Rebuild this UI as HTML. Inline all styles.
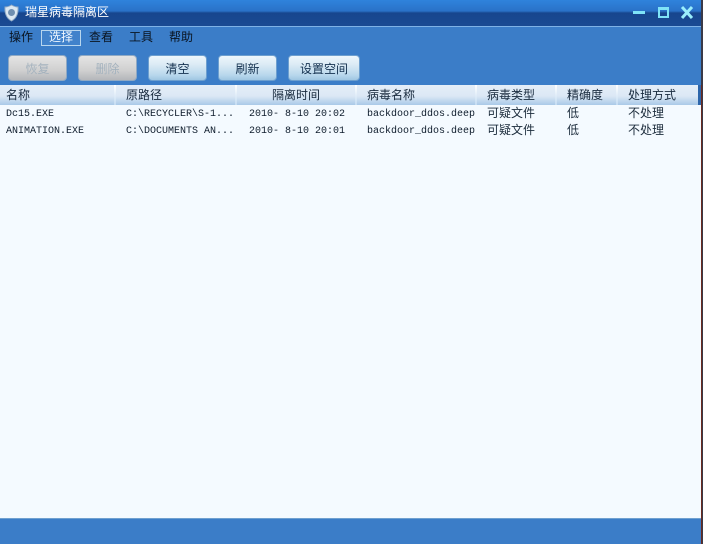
<!DOCTYPE html>
<html lang="zh"><head><meta charset="utf-8"><style>
html,body{margin:0;padding:0;width:703px;height:544px;overflow:hidden;background:#3b7dc8}
body{position:relative;font:12px/14px "WenQuanYi Zen Hei","Noto Sans CJK SC",sans-serif;color:#123}
div{position:absolute;white-space:nowrap}
.m{top:30px;height:14px;color:#0a1420}
.b{top:55px;height:26px;line-height:25px;text-align:center;border-radius:4px;box-sizing:border-box;background:linear-gradient(#eef7fc 0%,#dcebf5 35%,#b8d7ec 80%,#9fc6e2 100%);border:1px solid #6d9fcf;color:#14314f}
.d{background:linear-gradient(#e4e4e4,#d0d0d0 60%,#b4b6ba);color:#a4b2be;border-color:#8fa9c4}
.h{top:88px;color:#17293d}
.s{top:85px;width:2px;height:20px;background:linear-gradient(#fff,#c4dcf2);}
.t{color:#1c2c3c}
.l{font-family:"Liberation Mono",monospace;font-size:10px;letter-spacing:0;color:#0e1c2c;margin-top:2px}
</style></head><body>
<div style="left:0;top:0;width:703px;height:26px;background:linear-gradient(#2f83dc 0,#2a72c8 11px,#17468e 13px,#1a4a92 25px)"></div>
<div style="left:0;top:26px;width:703px;height:1px;background:#7fb2e6"></div>
<svg style="position:absolute;left:4px;top:4px" width="15" height="18" viewBox="0 0 15 18"><path d="M7.5 1 C10 2.500 12 3 14 3 C14.500 10 12 14.500 7.500 17 C3 14.500 .5 10 1 3 C3 3 5 2.500 7.500 1Z" fill="#dbe8f2" stroke="#8fa9c4"/><circle cx="7.500" cy="8.500" r="3.500" fill="#6f8fb0"/></svg>
<div style="left:25px;top:5px;color:#fff">瑞星病毒隔离区</div>
<div style="left:633px;top:11px;width:12px;height:3px;background:#7fe3f7"></div>
<div style="left:658px;top:7px;width:11px;height:11px;box-sizing:border-box;border:2px solid #7fe3f7;border-top-width:3px"></div>
<svg style="position:absolute;left:680px;top:5px" width="14" height="15" viewBox="0 0 14 15"><path d="M2 2 L12 13 M12 2 L2 13" stroke="#9aeefc" stroke-width="3"/></svg>

<div class="m" style="left:9px">操作</div>
<div style="left:41px;top:30px;width:40px;height:16px;box-sizing:border-box;border:1px solid #b8d6ee;background:#4182cb"></div>
<div class="m" style="left:49px;color:#f0f8ff">选择</div>
<div class="m" style="left:89px">查看</div>
<div class="m" style="left:129px">工具</div>
<div class="m" style="left:169px">帮助</div>

<div class="b d" style="left:8px;width:59px">恢复</div>
<div class="b d" style="left:78px;width:59px">删除</div>
<div class="b" style="left:148px;width:59px">清空</div>
<div class="b" style="left:218px;width:59px">刷新</div>
<div class="b" style="left:288px;width:72px">设置空间</div>

<div style="left:0;top:85px;width:698px;height:20px;background:linear-gradient(#e4eef8,#dce8f5 55%,#a9c9e8)"></div>
<div style="left:698px;top:85px;width:3px;height:20px;background:#2d66ab"></div>
<div class="s" style="left:114px"></div><div class="s" style="left:235px"></div><div class="s" style="left:355px"></div><div class="s" style="left:475px"></div><div class="s" style="left:555px"></div><div class="s" style="left:616px"></div>
<div class="h" style="left:6px">名称</div>
<div class="h" style="left:126px">原路径</div>
<div class="h" style="left:272px">隔离时间</div>
<div class="h" style="left:367px">病毒名称</div>
<div class="h" style="left:487px">病毒类型</div>
<div class="h" style="left:567px">精确度</div>
<div class="h" style="left:628px">处理方式</div>

<div style="left:0;top:105px;width:701px;height:413px;background:#f4faff"></div>
<div class="t l" style="left:6px;top:106px">Dc15.EXE</div>
<div class="t l" style="left:126px;top:106px">C:\RECYCLER\S-1...</div>
<div class="t l" style="left:249px;top:106px">2010- 8-10 20:02</div>
<div class="t l" style="left:367px;top:106px;width:108px;overflow:hidden">backdoor_ddos.deep</div>
<div class="t" style="left:487px;top:106px">可疑文件</div>
<div class="t" style="left:567px;top:106px">低</div>
<div class="t" style="left:628px;top:106px">不处理</div>
<div class="t l" style="left:6px;top:123px">ANIMATION.EXE</div>
<div class="t l" style="left:126px;top:123px">C:\DOCUMENTS AN...</div>
<div class="t l" style="left:249px;top:123px">2010- 8-10 20:01</div>
<div class="t l" style="left:367px;top:123px;width:108px;overflow:hidden">backdoor_ddos.deep</div>
<div class="t" style="left:487px;top:123px">可疑文件</div>
<div class="t" style="left:567px;top:123px">低</div>
<div class="t" style="left:628px;top:123px">不处理</div>

<div style="left:0;top:518px;width:701px;height:1px;background:#6fa0d0"></div>
<div style="left:701px;top:0;width:2px;height:544px;background:#3a3a48"></div>
<div style="left:701px;top:85px;width:1px;height:459px;background:#6a2a20"></div>
</body></html>
